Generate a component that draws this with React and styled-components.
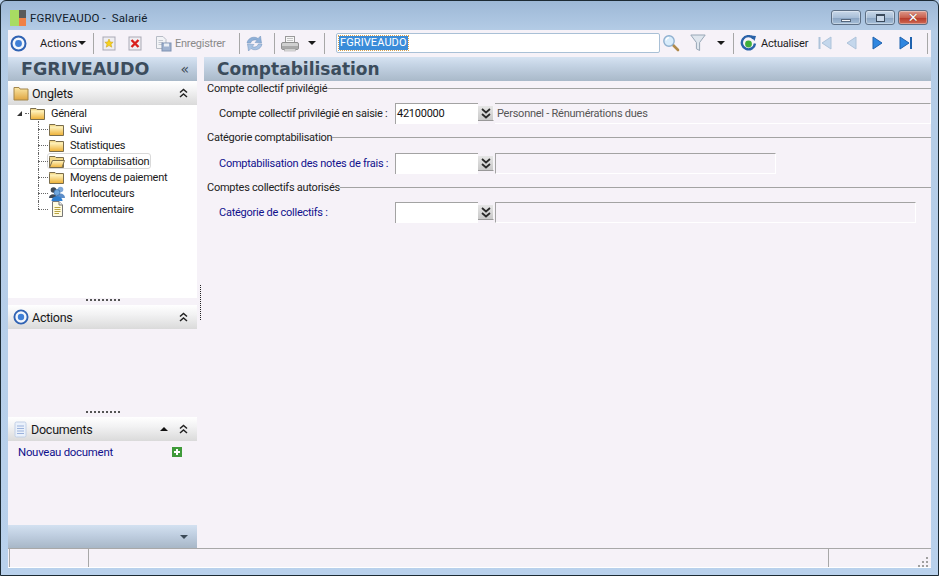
import React from 'react';
import styled, { createGlobalStyle } from 'styled-components';

const Global = createGlobalStyle`
  html, body { margin: 0; padding: 0; background: #b9d1ec; }
  body { font-family: Roboto, "Liberation Sans", Arial, sans-serif; font-size: 11px; letter-spacing: -0.25px; color: #111; }
`;

const Window = styled.div`
  width: 939px;
  height: 576px;
  box-sizing: border-box;
  display: flex;
  flex-direction: column;
  overflow: hidden;
  border: 1px solid #1c2a33;
  border-radius: 6px 6px 0 0;
  background: linear-gradient(180deg, #9db8d6 0, #b4cce6 30px, #b9d1ec 100%);
  padding: 0 7px 7px;
`;

const TitleBar = styled.div`
  height: 29px;
  flex: none;
  display: flex;
  align-items: center;
  padding: 4px 2px 0 2px;
  box-sizing: border-box;
`;

const AppLogo = styled.div`
  width: 16px;
  height: 16px;
  display: grid;
  grid-template-columns: 9px 7px;
  grid-template-rows: 8px 8px;
  margin-right: 4px;
`;

const LogoCell = styled.div`
  background: ${p => p.$c};
  grid-row: ${p => p.$row || 'auto'};
`;

const TitleText = styled.div`
  font-size: 11.5px;
  letter-spacing: 0.1px;
  white-space: pre;
  color: #10202c;
  flex: 1;
`;

const WinButton = styled.div`
  width: ${p => p.$w}px;
  height: 15px;
  margin-left: ${p => p.$ml || 4}px;
  margin-right: ${p => p.$mr || 0}px;
  border: 1px solid #5d6f85;
  border-radius: 3px;
  box-sizing: border-box;
  display: flex;
  align-items: center;
  justify-content: center;
  background: ${p => p.$close
    ? 'linear-gradient(180deg, #dd9a8c 0, #c9604e 50%, #b73c2c 55%, #cf6a55 100%)'
    : 'linear-gradient(180deg, #c9d8e9 0, #a9bfd8 50%, #8ba5c3 55%, #a7bfd8 100%)'};
  box-shadow: inset 0 0 0 1px rgba(255, 255, 255, 0.35);
`;

const MinGlyph = styled.div`
  width: 10px;
  height: 3px;
  margin-top: 5px;
  background: #f4f6f9;
  border: 1px solid #56677c;
  box-sizing: border-box;
`;

const MaxGlyph = styled.div`
  width: 9px;
  height: 8px;
  border: 1px solid #3b4a5c;
  border-top-width: 2px;
  background: #c9d8e9;
  box-sizing: border-box;
`;

const CloseGlyph = styled.div`
  font: bold 13px "DejaVu Sans", sans-serif;
  color: #fff;
  line-height: 13px;
  text-shadow: 0 0 1px #5c1c12;
`;

const Toolbar = styled.div`
  height: 26px;
  flex: none;
  display: flex;
  align-items: center;
  background: #f6f2f8;
  font-size: 11px;
`;

const Slot = styled.div`
  display: flex;
  align-items: center;
  flex: none;
  margin-left: ${p => p.$ml || 0}px;
`;

const Sep = styled.div`
  width: 1px;
  height: 21px;
  background: #a7a7a7;
  flex: none;
  margin-left: ${p => p.$ml || 0}px;
`;

const ToolLabel = styled.span`
  color: ${p => (p.$off ? '#8a8a8a' : '#1c1c1c')};
  margin-left: ${p => p.$ml || 0}px;
  width: ${p => p.$w}px;
  letter-spacing: ${p => p.$ls || 0}px;
  white-space: nowrap;
  flex: none;
`;

const DownArrow = styled.div`
  width: 0;
  height: 0;
  border-left: 4px solid transparent;
  border-right: 4px solid transparent;
  border-top: 4px solid #1a1a1a;
  flex: none;
  margin-left: ${p => p.$ml || 0}px;
`;

const SearchBox = styled.div`
  width: 324px;
  height: 20px;
  flex: none;
  box-sizing: border-box;
  margin-left: 11px;
  background: #fff;
  border: 1px solid #a9c0d6;
  border-radius: 2px;
  padding-left: 2px;
  display: flex;
  align-items: center;
`;

const SearchValue = styled.span`
  background: #3a8cd9;
  color: #fff;
  line-height: 14px;
  letter-spacing: 0.1px;
  padding: 0 1px;
  outline: 1px dotted #d8a050;
`;

const Body = styled.div`
  flex: 1;
  min-height: 0;
  display: flex;
  background: #f6f2f8;
`;

const Sidebar = styled.div`
  width: 189px;
  flex: none;
  display: flex;
  flex-direction: column;
`;

const Splitter = styled.div`
  width: 7px;
  flex: none;
  display: flex;
  justify-content: center;
`;

const SplitDots = styled.div`
  width: 0;
  height: 35px;
  margin-top: 229px;
  border-left: 1px dotted #222;
`;

const Main = styled.div`
  flex: 1;
  min-width: 0;
  display: flex;
  flex-direction: column;
`;

const BlueHeader = styled.div`
  height: 24px;
  flex: none;
  box-sizing: border-box;
  margin-top: 1px;
  display: flex;
  align-items: center;
  justify-content: space-between;
  background: linear-gradient(180deg, #d6e3f2 0, #c4d3e4 35%, #a9b9c9 100%);
  color: #3b4c5c;
  font-family: "DejaVu Sans", sans-serif;
  font-weight: bold;
  letter-spacing: 0;
  padding: ${p => p.$pad || '0 8px 0 13px'};
  font-size: ${p => p.$size}px;
`;

const Chevrons = styled.div`
  color: #3c4a57;
  font: 14px "DejaVu Sans", sans-serif;
  line-height: 14px;
`;

const PanelHead = styled.div`
  height: 24px;
  flex: none;
  display: flex;
  align-items: center;
  padding: 0 9px 0 5px;
  box-sizing: border-box;
  background: linear-gradient(180deg, #ffffff 0, #f2f2f3 40%, #dadada 100%);
  font-size: 12.5px;
  color: #181818;
`;

const PanelTitle = styled.span`
  margin-left: 3px;
  flex: 1;
`;

const Tree = styled.div`
  height: 193px;
  flex: none;
  background: #fff;
  box-sizing: border-box;
  padding: 0 0 0 9px;
  font-size: 11px;
`;

const TreeRow = styled.div`
  height: 16px;
  display: flex;
  align-items: center;
  color: #1a1a1a;
`;

const Expander = styled.div`
  width: 0;
  height: 0;
  border-bottom: 5px solid #333;
  border-left: 5px solid transparent;
  margin-right: 3px;
`;

const Link = styled.div`
  width: 10px;
  align-self: stretch;
  margin-left: ${p => p.$ml || 30}px;
  position: relative;
  flex: none;
  &::before {
    content: '';
    position: absolute;
    left: 0;
    top: 0;
    height: ${p => (p.$last ? 8 : 16)}px;
    border-left: 1px dotted #666;
  }
  &::after {
    content: '';
    position: absolute;
    left: 0;
    top: 8px;
    width: 10px;
    border-top: 1px dotted #666;
  }
`;

const RootDots = styled.div`
  width: 4px;
  border-top: 1px dotted #666;
  margin-right: 1px;
`;

const NodeBox = styled.div`
  display: flex;
  align-items: center;
  height: 16px;
  box-sizing: border-box;
  padding: 0 1px 0 1px;
  border: 1px solid ${p => (p.$sel ? '#d9d9d9' : 'transparent')};
  border-radius: 3px;
  margin-left: -1px;
`;

const NodeIcon = styled.div`
  width: 16px;
  flex: none;
  display: flex;
  justify-content: center;
`;

const NodeLabel = styled.span`
  margin-left: 5px;
  white-space: nowrap;
`;

const Grip = styled.div`
  height: 7px;
  flex: none;
  display: flex;
  justify-content: center;
  padding-top: ${p => p.$top}px;
  box-sizing: border-box;
  &::before {
    content: '';
    width: 34px;
    height: 0;
    border-top: 2px dotted #555;
  }
`;

const PanelBody = styled.div`
  flex: none;
  height: ${p => p.$h}px;
  box-sizing: border-box;
`;

const DocRow = styled.div`
  display: flex;
  align-items: center;
  justify-content: space-between;
  padding: 4px 15px 0 10px;
  color: #10108c;
  font-size: 11.4px;
`;

const BottomBar = styled.div`
  height: 24px;
  flex: none;
  display: flex;
  align-items: center;
  justify-content: flex-end;
  padding-right: 9px;
  background: linear-gradient(180deg, #d3e1f1 0, #bccbdd 50%, #a6b5c5 100%);
`;

const Sections = styled.div`
  padding: 0 0 0 3px;
  flex: 1;
  font-size: 11px;
`;

const Legend = styled.div`
  display: flex;
  align-items: center;
  height: 14px;
  margin-top: ${p => p.$mt || 0}px;
  color: #222;
  white-space: nowrap;
  &::after {
    content: '';
    flex: 1;
    height: 1px;
    background: #a3a3a3;
  }
`;

const FieldRow = styled.div`
  display: flex;
  height: 21px;
  margin-top: ${p => p.$mt || 0}px;
  padding-left: 12px;
`;

const FieldLabel = styled.div`
  width: 176px;
  flex: none;
  line-height: 21px;
  color: ${p => (p.$blue ? '#10108c' : '#222')};
  white-space: nowrap;
`;

const Input = styled.div`
  width: 83px;
  flex: none;
  box-sizing: border-box;
  border-top: 1px solid #a3a3a3;
  border-left: 1px solid #a3a3a3;
  background: #fff;
  padding-left: 1px;
  line-height: 20px;
  color: #111;
`;

const DropButton = styled.div`
  width: 16px;
  height: 15px;
  flex: none;
  margin: 3px 1px 0 0;
  box-sizing: border-box;
  display: flex;
  align-items: center;
  justify-content: center;
  background: linear-gradient(180deg, #e6e6e6 0, #c9c9c9 100%);
  border-right: 1px solid #f6f6f6;
  border-bottom: 1px solid #999;
`;

const LibelBox = styled.div`
  flex: ${p => (p.$w ? 'none' : 1)};
  width: ${p => (p.$w ? `${p.$w}px` : 'auto')};
  box-sizing: border-box;
  border-top: 1px solid #a3a3a3;
  border-left: ${p => (p.$w ? '1px solid #a3a3a3' : 'none')};
  border-right: 1px solid #fff;
  border-bottom: 1px solid #fff;
  padding-left: 2px;
  line-height: 20px;
  color: #555;
  white-space: nowrap;
`;

const StatusBar = styled.div`
  height: 18px;
  flex: none;
  display: flex;
  background: #f6f2f8;
  border-top: 1px solid #a8a8a8;
  padding-left: 1px;
  border-bottom: 1px solid #fff;
`;

const StatusCell = styled.div`
  width: ${p => (p.$w ? `${p.$w}px` : 'auto')};
  flex: ${p => (p.$w ? 'none' : 1)};
  box-sizing: border-box;
  border-left: 1px solid #a8a8a8;
  display: flex;
  justify-content: flex-end;
  align-items: flex-end;
`;

const ResizeGrip = styled.svg`
  margin: 0 2px 0 0;
`;

const TargetIcon = ({ size = 17 }) => (
  <svg width={size} height={size} viewBox="0 0 17 17">
    <circle cx="8.5" cy="8.5" r="7" fill="#f2f6fc" stroke="#2f62b3" strokeWidth="2" />
    <circle cx="8.5" cy="8.5" r="3.4" fill="#3f7fd6" />
  </svg>
);

const FolderIcon = ({ open }) => (
  <svg width="16" height="13" viewBox="0 0 16 13">
    <defs>
      <linearGradient id="fold" x1="0" y1="0" x2="0" y2="1">
        <stop offset="0" stopColor="#fff6c4" />
        <stop offset="1" stopColor="#eeb33c" />
      </linearGradient>
    </defs>
    <path d="M.5 2.5 V1.5 H6 L7 2.5 H14.5 V12.5 H.5 Z" fill="#f3d98a" stroke="#7a6d4c" />
    {open
      ? <path d="M.5 12.5 L3.5 5.5 H15.5 L13 12.5 Z" fill="url(#fold)" stroke="#7a6d4c" />
      : <rect x="1" y="3.5" width="13" height="8.5" fill="url(#fold)" />}
  </svg>
);

const OngletsIcon = () => (
  <svg width="16" height="15" viewBox="0 0 16 15">
    <defs>
      <linearGradient id="ong" x1="0" y1="0" x2="0" y2="1">
        <stop offset="0" stopColor="#fbe7a5" />
        <stop offset="1" stopColor="#dfa540" />
      </linearGradient>
    </defs>
    <path d="M1 1.5 H6 L7 3 H15 V14 H1 Z" fill="url(#ong)" stroke="#a2854a" />
  </svg>
);

const PeopleIcon = () => (
  <svg width="16" height="15" viewBox="0 0 16 15">
    <circle cx="11.5" cy="3.5" r="2.8" fill="#7fa8d8" />
    <path d="M7 12 C7 6 16 6 16 12 Z" fill="#5e8ec8" />
    <circle cx="4.5" cy="4" r="2.8" fill="#3e4a58" />
    <path d="M0 12 C0 7 8 7 8 12 Z" fill="#3e4a58" />
    <circle cx="8" cy="6.5" r="3" fill="#6fa7de" stroke="#2a5f9e" strokeWidth=".6" />
    <path d="M2.5 15 C2.5 8.5 13.5 8.5 13.5 15 Z" fill="#2f7fd0" />
  </svg>
);

const NoteIcon = () => (
  <svg width="14" height="16" viewBox="0 0 14 16">
    <path d="M2.5 .5 H9 L12.5 4 V15.5 H2.5 Z" fill="#fffbe0" stroke="#777" />
    <path d="M9 .5 V4 H12.5" fill="#eee" stroke="#777" />
    <path d="M4.5 6.5 H10.5 M4.5 8.5 H10.5 M4.5 10.5 H10.5 M4.5 12.5 H9" stroke="#b8a240" />
  </svg>
);

const DocIcon = () => (
  <svg width="15" height="17" viewBox="0 0 15 17">
    <rect x="2" y="1" width="11" height="15" rx="1.5" fill="#eaf1fb" stroke="#c2d0e6" />
    <path d="M4 5 H11 M4 7.5 H11 M4 10 H11 M4 12.5 H11" stroke="#9bb2dc" />
  </svg>
);

const StarDocIcon = () => (
  <svg width="14" height="15" viewBox="0 0 14 15">
    <rect x="1" y="1" width="12" height="13" fill="#efeef2" stroke="#a9a9b5" />
    <path d="M7 3 L8.3 6 L11.2 6.2 L9 8.2 L9.8 11.2 L7 9.6 L4.2 11.2 L5 8.2 L2.8 6.2 L5.7 6 Z" fill="#f6d21e" stroke="#c79a14" strokeWidth=".5" />
  </svg>
);

const CrossDocIcon = () => (
  <svg width="14" height="15" viewBox="0 0 14 15">
    <rect x="1" y="1" width="12" height="13" fill="#efeef2" stroke="#a9a9b5" />
    <path d="M3.5 4 L10.5 11 M10.5 4 L3.5 11" stroke="#d9201c" strokeWidth="2.4" />
  </svg>
);

const SaveDocIcon = () => (
  <svg width="17" height="17" viewBox="0 0 17 17">
    <path d="M1.5 1.5 H8 L11 4.5 V13.5 H1.5 Z" fill="#f2f3f6" stroke="#b7bcc6" />
    <path d="M3.5 5.5 H8 M3.5 7.5 H8 M3.5 9.5 H7" stroke="#c4c9d2" />
    <rect x="7" y="8" width="9" height="8" fill="#9fb2d0" stroke="#7f92b2" />
    <rect x="9" y="8.5" width="5" height="3" fill="#e9eef5" />
  </svg>
);

const RefreshIcon = () => (
  <svg width="17" height="17" viewBox="0 0 17 17">
    <path d="M1 8 C2 2 9 1 12 3.5 L14.5 1 L15.5 8 L9 7.5 L11 5.4 C8 4.2 5.5 5.5 4.6 8 Z" fill="#8fb0d8" stroke="#7393bb" strokeWidth=".5" />
    <path d="M16 9 C15 15 8 16 5 13.5 L2.5 16 L1.5 9 L8 9.5 L6 11.6 C9 12.8 11.5 11.5 12.4 9 Z" fill="#a9c3e3" stroke="#7393bb" strokeWidth=".5" />
  </svg>
);

const PrinterIcon = () => (
  <svg width="18" height="17" viewBox="0 0 18 17">
    <rect x="4.5" y="1.5" width="9" height="6" fill="#f7f7f7" stroke="#9a9a9a" />
    <path d="M6 3.5 H12 M6 5.5 H12" stroke="#c4c4c4" />
    <rect x=".5" y="7.5" width="17" height="7" rx="1.5" fill="#d0d0d0" stroke="#8f8f8f" />
    <rect x="1" y="11" width="16" height="3" fill="#a9a9a9" />
    <rect x="3.5" y="14" width="11" height="2" fill="#e2e2e2" stroke="#9a9a9a" strokeWidth=".5" />
  </svg>
);

const SearchIcon = () => (
  <svg width="18" height="18" viewBox="0 0 18 18">
    <path d="M10.5 10.5 L16 16" stroke="#b08a4a" strokeWidth="2.6" strokeLinecap="round" />
    <circle cx="7" cy="7" r="5.2" fill="#d8ecfb" stroke="#8fb0cf" strokeWidth="1.4" />
    <path d="M4 6.5 A3.4 3.4 0 0 1 7 3.6" fill="none" stroke="#fff" strokeWidth="1.2" />
  </svg>
);

const FilterIcon = () => (
  <svg width="16" height="18" viewBox="0 0 16 18">
    <path d="M.8 1 H15.2 L9.6 8.5 V16.5 L6.4 14.8 V8.5 Z" fill="#dfe6ee" stroke="#98a7b6" />
  </svg>
);

const ReloadIcon = () => (
  <svg width="17" height="17" viewBox="0 0 17 17">
    <path d="M13.5 3.5 A6.6 6.6 0 1 0 15 8.5" fill="none" stroke="#2a62a8" strokeWidth="2.4" />
    <path d="M10.5 .5 L16 1 L14.5 6 Z" fill="#2a62a8" />
    <circle cx="8.5" cy="9" r="3.4" fill="#3fae3a" />
  </svg>
);

const NavIcon = ({ dir, bar, on }) => {
  const fill = on ? '#2f86e0' : '#c4d7ec';
  const stroke = on ? '#1f62ae' : '#aec3da';
  const tri = dir === 'left' ? 'M14 2 V14 L5 8 Z' : 'M3 2 V14 L12 8 Z';
  return (
    <svg width="16" height="16" viewBox="0 0 16 16">
      <path d={tri} fill={fill} stroke={stroke} />
      {bar && <rect x={dir === 'left' ? 1.5 : 13} y="2" width="2" height="12" fill={stroke} />}
    </svg>
  );
};

const ChevronsDown = () => (
  <svg width="10" height="11" viewBox="0 0 10 11">
    <path d="M1 1 L5 4.5 L9 1 M1 6 L5 9.5 L9 6" fill="none" stroke="#2a2a2a" strokeWidth="1.8" />
  </svg>
);

const ChevronsUp = () => (
  <svg width="9" height="10" viewBox="0 0 9 10">
    <path d="M1 4.5 L4.5 1.5 L8 4.5 M1 9 L4.5 6 L8 9" fill="none" stroke="#222" strokeWidth="1.5" />
  </svg>
);

const TriUp = styled.div`
  width: 0;
  height: 0;
  border-left: 4px solid transparent;
  border-right: 4px solid transparent;
  border-bottom: 4px solid #111;
  margin-right: 11px;
`;

const TriDown = styled.div`
  width: 0;
  height: 0;
  border-left: 4px solid transparent;
  border-right: 4px solid transparent;
  border-top: 4px solid #3c4a57;
`;

const PlusIcon = () => (
  <svg width="10" height="10" viewBox="0 0 10 10">
    <rect width="10" height="10" fill="#3f9a3a" />
    <path d="M5 2 V8 M2 5 H8" stroke="#fff" strokeWidth="2" />
  </svg>
);

const children = [
  { label: 'Suivi', icon: <FolderIcon /> },
  { label: 'Statistiques', icon: <FolderIcon /> },
  { label: 'Comptabilisation', icon: <FolderIcon open />, sel: true },
  { label: 'Moyens de paiement', icon: <FolderIcon /> },
  { label: 'Interlocuteurs', icon: <PeopleIcon /> },
  { label: 'Commentaire', icon: <NoteIcon />, last: true },
];

export default function App() {
  return (
    <Window>
      <Global />
      <TitleBar>
        <AppLogo>
          <LogoCell $c="#5a5a5a" />
          <LogoCell $c="#a8dc62" $row="1 / span 2" />
          <LogoCell $c="#f08146" />
        </AppLogo>
        <TitleText>FGRIVEAUDO -  Salarié</TitleText>
        <WinButton $w={30}><MinGlyph /></WinButton>
        <WinButton $w={30}><MaxGlyph /></WinButton>
        <WinButton $w={30} $ml={3} $mr={1} $close><CloseGlyph>✕</CloseGlyph></WinButton>
      </TitleBar>

      <Toolbar>
        <Slot $ml={2}><TargetIcon /></Slot>
        <ToolLabel $ml={13} $w={38}>Actions</ToolLabel>
        <DownArrow />
        <Sep $ml={7} />
        <Slot $ml={8}><StarDocIcon /></Slot>
        <Slot $ml={12}><CrossDocIcon /></Slot>
        <Slot $ml={13}><SaveDocIcon /></Slot>
        <ToolLabel $ml={3} $w={53} $ls={-0.25} $off>Enregistrer</ToolLabel>
        <Sep $ml={11} />
        <Slot $ml={6}><RefreshIcon /></Slot>
        <Sep $ml={11} />
        <Slot $ml={6}><PrinterIcon /></Slot>
        <DownArrow $ml={9} />
        <Sep $ml={8} />
        <SearchBox><SearchValue>FGRIVEAUDO</SearchValue></SearchBox>
        <Slot $ml={2}><SearchIcon /></Slot>
        <Slot $ml={10}><FilterIcon /></Slot>
        <DownArrow $ml={11} />
        <Sep $ml={8} />
        <Slot $ml={6}><ReloadIcon /></Slot>
        <ToolLabel $ml={4} $w={47} $ls={-0.2}>Actualiser</ToolLabel>
        <Slot $ml={9}><NavIcon dir="left" bar /></Slot>
        <Slot $ml={9}><NavIcon dir="left" /></Slot>
        <Slot $ml={12}><NavIcon dir="right" on /></Slot>
        <Slot $ml={11}><NavIcon dir="right" bar on /></Slot>
        <Sep $ml={14} />
      </Toolbar>

      <Body>
        <Sidebar>
          <BlueHeader $size={17.5}>
            <span>FGRIVEAUDO</span>
            <Chevrons>«</Chevrons>
          </BlueHeader>
          <PanelHead>
            <OngletsIcon />
            <PanelTitle>Onglets</PanelTitle>
            <ChevronsUp />
          </PanelHead>
          <Tree>
            <TreeRow>
              <Expander />
              <RootDots />
              <FolderIcon />
              <NodeLabel>Général</NodeLabel>
            </TreeRow>
            {children.map(item => (
              <TreeRow key={item.label}>
                <Link $ml={21} $last={item.last} />
                <NodeBox $sel={item.sel}>
                  <NodeIcon>{item.icon}</NodeIcon>
                  <NodeLabel>{item.label}</NodeLabel>
                </NodeBox>
              </TreeRow>
            ))}
          </Tree>
          <Grip $top={1} />
          <PanelHead>
            <TargetIcon size={16} />
            <PanelTitle>Actions</PanelTitle>
            <ChevronsUp />
          </PanelHead>
          <PanelBody $h={81} />
          <Grip $top={1} />
          <PanelHead>
            <DocIcon />
            <PanelTitle>Documents</PanelTitle>
            <TriUp />
            <ChevronsUp />
          </PanelHead>
          <PanelBody $h={84}>
            <DocRow>
              <span>Nouveau document</span>
              <PlusIcon />
            </DocRow>
          </PanelBody>
          <BottomBar><TriDown /></BottomBar>
        </Sidebar>

        <Splitter><SplitDots /></Splitter>

        <Main>
          <BlueHeader $pad="0 0 0 13px" $size={17}>
            <span>Comptabilisation</span>
          </BlueHeader>
          <Sections>
            <Legend>Compte collectif privilégié</Legend>
            <FieldRow $mt={8}>
              <FieldLabel>Compte collectif privilégié en saisie :</FieldLabel>
              <Input>42100000</Input>
              <DropButton><ChevronsDown /></DropButton>
              <LibelBox>Personnel - Rénumérations dues</LibelBox>
            </FieldRow>
            <Legend $mt={6}>Catégorie comptabilisation</Legend>
            <FieldRow $mt={9}>
              <FieldLabel $blue>Comptabilisation des notes de frais :</FieldLabel>
              <Input />
              <DropButton><ChevronsDown /></DropButton>
              <LibelBox $w={281} />
            </FieldRow>
            <Legend $mt={6}>Comptes collectifs autorisés</Legend>
            <FieldRow $mt={8}>
              <FieldLabel $blue>Catégorie de collectifs :</FieldLabel>
              <Input />
              <DropButton><ChevronsDown /></DropButton>
              <LibelBox $w={421} />
            </FieldRow>
          </Sections>
        </Main>
      </Body>

      <StatusBar>
        <StatusCell $w={79} />
        <StatusCell />
        <StatusCell $w={103}>
          <ResizeGrip width="12" height="11" viewBox="0 0 12 11">
            <path d="M9 1 h2 v2 h-2 z M5 5 h2 v2 h-2 z M9 5 h2 v2 h-2 z M1 9 h2 v2 h-2 z M5 9 h2 v2 h-2 z M9 9 h2 v2 h-2 z" fill="#a0a0a0" />
          </ResizeGrip>
        </StatusCell>
      </StatusBar>
    </Window>
  );
}
